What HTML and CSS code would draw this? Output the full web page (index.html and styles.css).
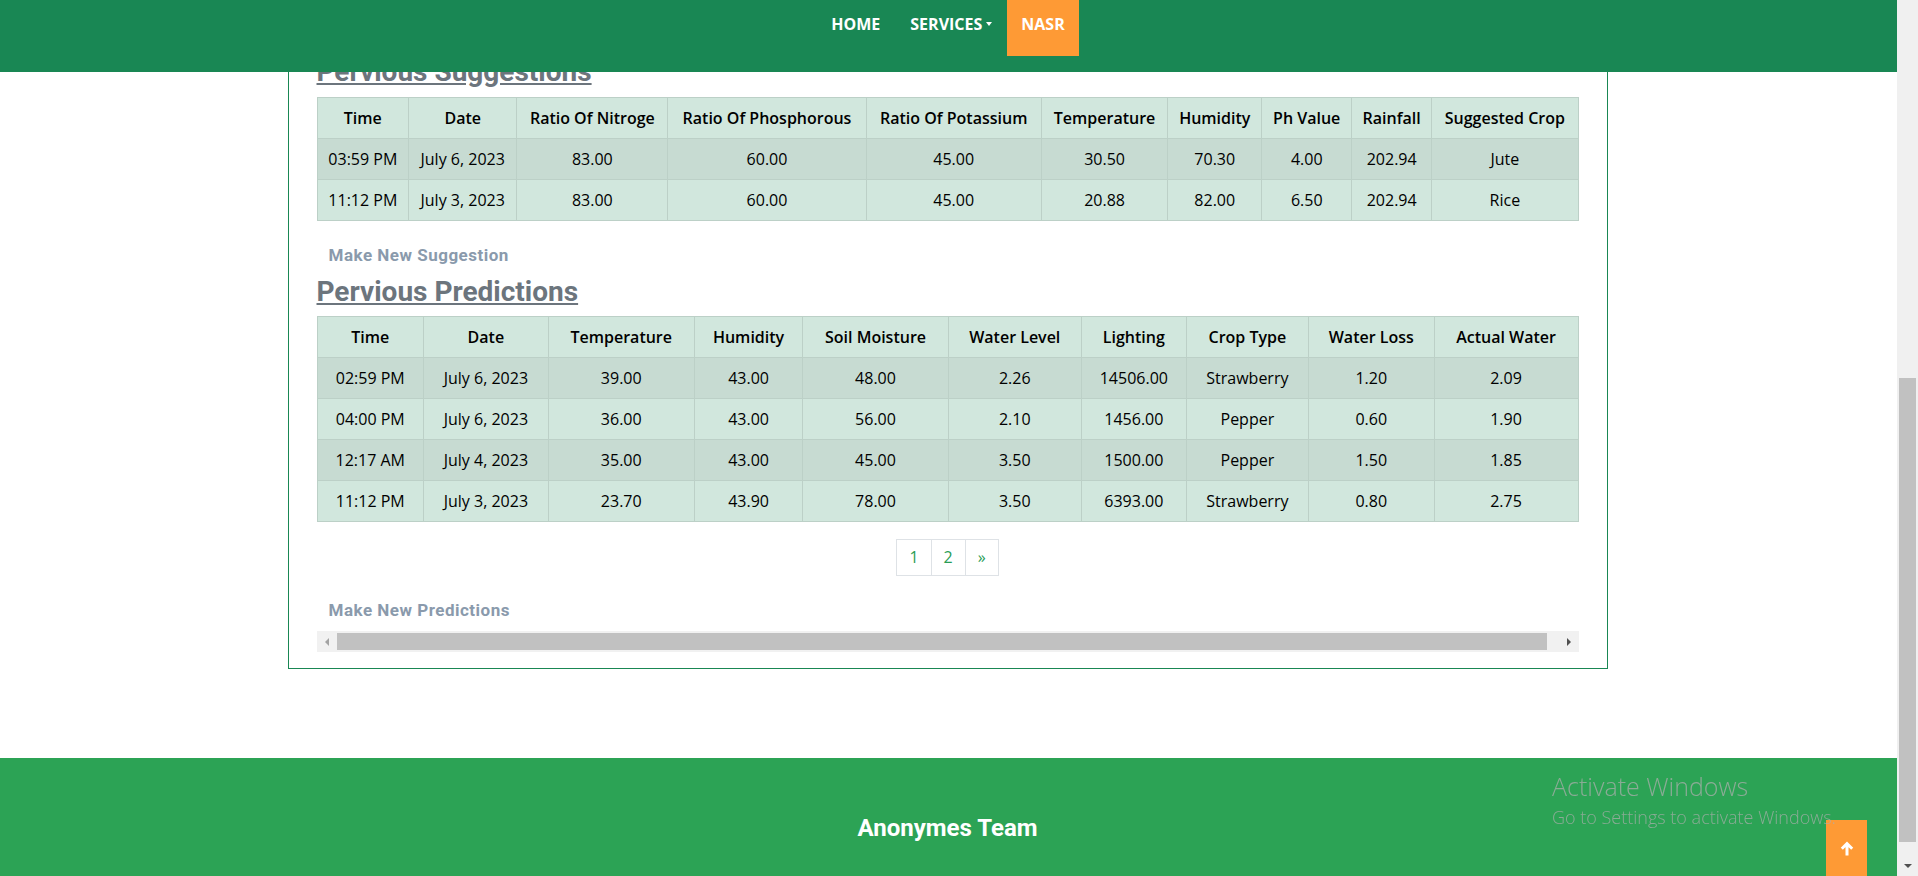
FILE: index.html
```html
<!DOCTYPE html>
<html lang="en">
<head>
<meta charset="utf-8">
<title>NASR - History</title>
<link rel="stylesheet" href="styles.css">
</head>
<body>
<header class="topbar">
  <ul class="nav">
    <li><a class="nav-link" href="#">Home</a></li>
    <li><a class="nav-link" href="#">Services<span class="caret"></span></a></li>
    <li><a class="nav-link active" href="#">NASR</a></li>
  </ul>
</header>

<div class="page">
  <main class="wrap">
    <section class="box">
      <h3 class="title">Pervious Suggestions</h3>
      <table class="grid">
        <thead>
          <tr><th>Time</th><th>Date</th><th>Ratio Of Nitroge</th><th>Ratio Of Phosphorous</th><th>Ratio Of Potassium</th><th>Temperature</th><th>Humidity</th><th>Ph Value</th><th>Rainfall</th><th>Suggested Crop</th></tr>
        </thead>
        <tbody>
          <tr><td>03:59 PM</td><td>July 6, 2023</td><td>83.00</td><td>60.00</td><td>45.00</td><td>30.50</td><td>70.30</td><td>4.00</td><td>202.94</td><td>Jute</td></tr>
          <tr><td>11:12 PM</td><td>July 3, 2023</td><td>83.00</td><td>60.00</td><td>45.00</td><td>20.88</td><td>82.00</td><td>6.50</td><td>202.94</td><td>Rice</td></tr>
        </tbody>
      </table>
      <a class="action action-first" href="#">Make New Suggestion</a>

      <h3 class="title">Pervious Predictions</h3>
      <table class="grid">
        <thead>
          <tr><th>Time</th><th>Date</th><th>Temperature</th><th>Humidity</th><th>Soil Moisture</th><th>Water Level</th><th>Lighting</th><th>Crop Type</th><th>Water Loss</th><th>Actual Water</th></tr>
        </thead>
        <tbody>
          <tr><td>02:59 PM</td><td>July 6, 2023</td><td>39.00</td><td>43.00</td><td>48.00</td><td>2.26</td><td>14506.00</td><td>Strawberry</td><td>1.20</td><td>2.09</td></tr>
          <tr><td>04:00 PM</td><td>July 6, 2023</td><td>36.00</td><td>43.00</td><td>56.00</td><td>2.10</td><td>1456.00</td><td>Pepper</td><td>0.60</td><td>1.90</td></tr>
          <tr><td>12:17 AM</td><td>July 4, 2023</td><td>35.00</td><td>43.00</td><td>45.00</td><td>3.50</td><td>1500.00</td><td>Pepper</td><td>1.50</td><td>1.85</td></tr>
          <tr><td>11:12 PM</td><td>July 3, 2023</td><td>23.70</td><td>43.90</td><td>78.00</td><td>3.50</td><td>6393.00</td><td>Strawberry</td><td>0.80</td><td>2.75</td></tr>
        </tbody>
      </table>

      <ul class="pager">
        <li><a href="#">1</a></li>
        <li><a href="#">2</a></li>
        <li><a href="#">&raquo;</a></li>
      </ul>

      <a class="action action-last" href="#">Make New Predictions</a>

      <div class="hscroll">
        <span class="harrow"><span class="tri-left"></span></span>
        <span class="hthumb"></span>
        <span class="harrow"><span class="tri-right"></span></span>
      </div>
    </section>
  </main>

  <footer class="footer">
    <p class="team">Anonymes Team</p>
  </footer>
</div>

<div class="vscroll">
  <span class="vthumb"></span>
  <span class="varrow"><span class="tri-down"></span></span>
</div>

<a class="totop" href="#">
  <svg width="14" height="15" viewBox="0 0 14 15" aria-hidden="true"><path d="M7 14.5V2.5M1.8 7.7L7 2.5l5.2 5.2" fill="none" stroke="#fff" stroke-width="3"/></svg>
</a>

<div class="watermark">
  <div class="wm-title">Activate Windows</div>
  <div class="wm-sub">Go to Settings to activate Windows.</div>
</div>
</body>
</html>
```

FILE: styles.css
```css
* { box-sizing: border-box; }

html, body {
  margin: 0;
  height: 876px;
  overflow: hidden;
}

body {
  font-family: "Open Sans", "Liberation Sans", sans-serif;
  font-size: 16px;
  line-height: 1.5;
  color: #212529;
  background: #fff;
}

.page {
  width: calc(100% - 23px);
}

/* ---------- top navigation ---------- */
.topbar {
  position: fixed;
  top: 0;
  left: 0;
  width: calc(100% - 23px);
  height: 72px;
  background: #198754;
  z-index: 10;
  display: flex;
  justify-content: center;
}

.topbar::after {
  content: "";
  position: absolute;
  top: 0;
  right: -2px;
  width: 2px;
  height: 72px;
  background: #198754;
}

.nav {
  display: flex;
  align-items: flex-start;
  list-style: none;
  margin: 0;
  padding: 0;
}

.nav-link {
  display: flex;
  align-items: center;
  padding: 12px 15px 20px;
  line-height: 24px;
  font-size: 16px;
  font-weight: 700;
  color: #fff;
  text-transform: uppercase;
  text-decoration: none;
}

.nav-link.active {
  background: #fe9a35;
  padding-left: 14px;
  padding-right: 14px;
}

.caret {
  display: inline-block;
  margin-left: 4px;
  border-top: 4px solid #fff;
  border-left: 3.5px solid transparent;
  border-right: 3.5px solid transparent;
}

/* ---------- content box ---------- */
.wrap {
  width: 1320px;
  margin: 0 auto;
}

.box {
  border: 1px solid #198754;
  padding: 54px 28px 16px;
}

.title {
  margin: 0 0 8px;
  font-family: Roboto, "Liberation Sans", sans-serif;
  font-size: 28px;
  font-weight: 700;
  line-height: 1.2;
  color: #6c757d;
  text-decoration: underline;
}

.grid {
  width: 100%;
  border-collapse: collapse;
  text-align: center;
  color: #000;
  background: #d1e7dd;
}

.grid th,
.grid td {
  border: 1px solid #bcd0c7;
  padding: 8px;
  font-weight: 400;
  white-space: nowrap;
}

.grid th {
  font-weight: 600;
}

.grid tbody tr:nth-child(odd) {
  background: #c7dbd2;
}

.action {
  display: block;
  padding: 0 12px;
  font-family: Roboto, "Liberation Sans", sans-serif;
  font-size: 17px;
  font-weight: 700;
  letter-spacing: 0.5px;
  line-height: 27px;
  color: #8a9aac;
  text-decoration: none;
}

.action-first {
  margin: 21px 0 6px;
}

.action-last {
  margin: 21px 0 7px;
}

/* ---------- pagination ---------- */
.pager {
  display: flex;
  justify-content: center;
  list-style: none;
  margin: 17px 0 0;
  padding: 0;
}

.pager a {
  display: block;
  padding: 6px 12px;
  line-height: 23px;
  border: 1px solid #dee2e6;
  margin-left: -1px;
  color: #2a9d55;
  text-decoration: none;
}

.pager li:first-child a {
  margin-left: 0;
}

/* ---------- inner horizontal scrollbar ---------- */
.hscroll {
  display: flex;
  align-items: center;
  height: 21px;
  background: #f1f1f1;
}

.harrow {
  width: 20px;
  display: flex;
  justify-content: center;
  align-items: center;
}

.hthumb {
  flex: 1;
  height: 17px;
  margin-right: 12px;
  background: #c1c1c1;
}

.tri-left {
  border-right: 4px solid #a3a3a3;
  border-top: 4px solid transparent;
  border-bottom: 4px solid transparent;
}

.tri-right {
  border-left: 4px solid #505050;
  border-top: 4px solid transparent;
  border-bottom: 4px solid transparent;
}

/* ---------- footer ---------- */
.footer {
  position: relative;
  margin-top: 89px;
  padding: 56px 0 40px;
  background: #2ca355;
  text-align: center;
}

.footer::after {
  content: "";
  position: absolute;
  top: 0;
  right: -2px;
  width: 2px;
  height: 100%;
  background: #2ca355;
}

.team {
  margin: 0;
  font-family: Roboto, "Liberation Sans", sans-serif;
  font-size: 24px;
  font-weight: 700;
  line-height: 1.2;
  color: #fff;
}

/* ---------- page scrollbar ---------- */
.vscroll {
  position: fixed;
  top: 0;
  right: 0;
  width: 21px;
  height: 876px;
  background: #f0f0f0;
  display: flex;
  flex-direction: column;
  align-items: center;
  padding-top: 378px;
  z-index: 15;
}

.vthumb {
  width: 17px;
  height: 464px;
  background: #c1c1c1;
}

.varrow {
  flex: 1;
  display: flex;
  align-items: flex-end;
  justify-content: center;
  padding-bottom: 8px;
}

.tri-down {
  border-top: 4px solid #505050;
  border-left: 4.5px solid transparent;
  border-right: 4.5px solid transparent;
}

/* ---------- back to top ---------- */
.totop {
  position: fixed;
  right: 51px;
  bottom: 0;
  width: 41px;
  height: 56px;
  background: #fe9a35;
  display: flex;
  align-items: center;
  justify-content: center;
  z-index: 20;
}

/* ---------- OS watermark ---------- */
.watermark {
  position: fixed;
  left: 1552px;
  top: 770px;
  z-index: 30;
  font-family: "Open Sans", sans-serif;
  font-weight: 300;
  color: rgba(175, 175, 175, 0.72);
  pointer-events: none;
  white-space: nowrap;
}

.wm-title {
  font-size: 25px;
  line-height: 33px;
}

.wm-sub {
  margin-top: 1px;
  font-size: 18px;
  line-height: 26px;
}
```
